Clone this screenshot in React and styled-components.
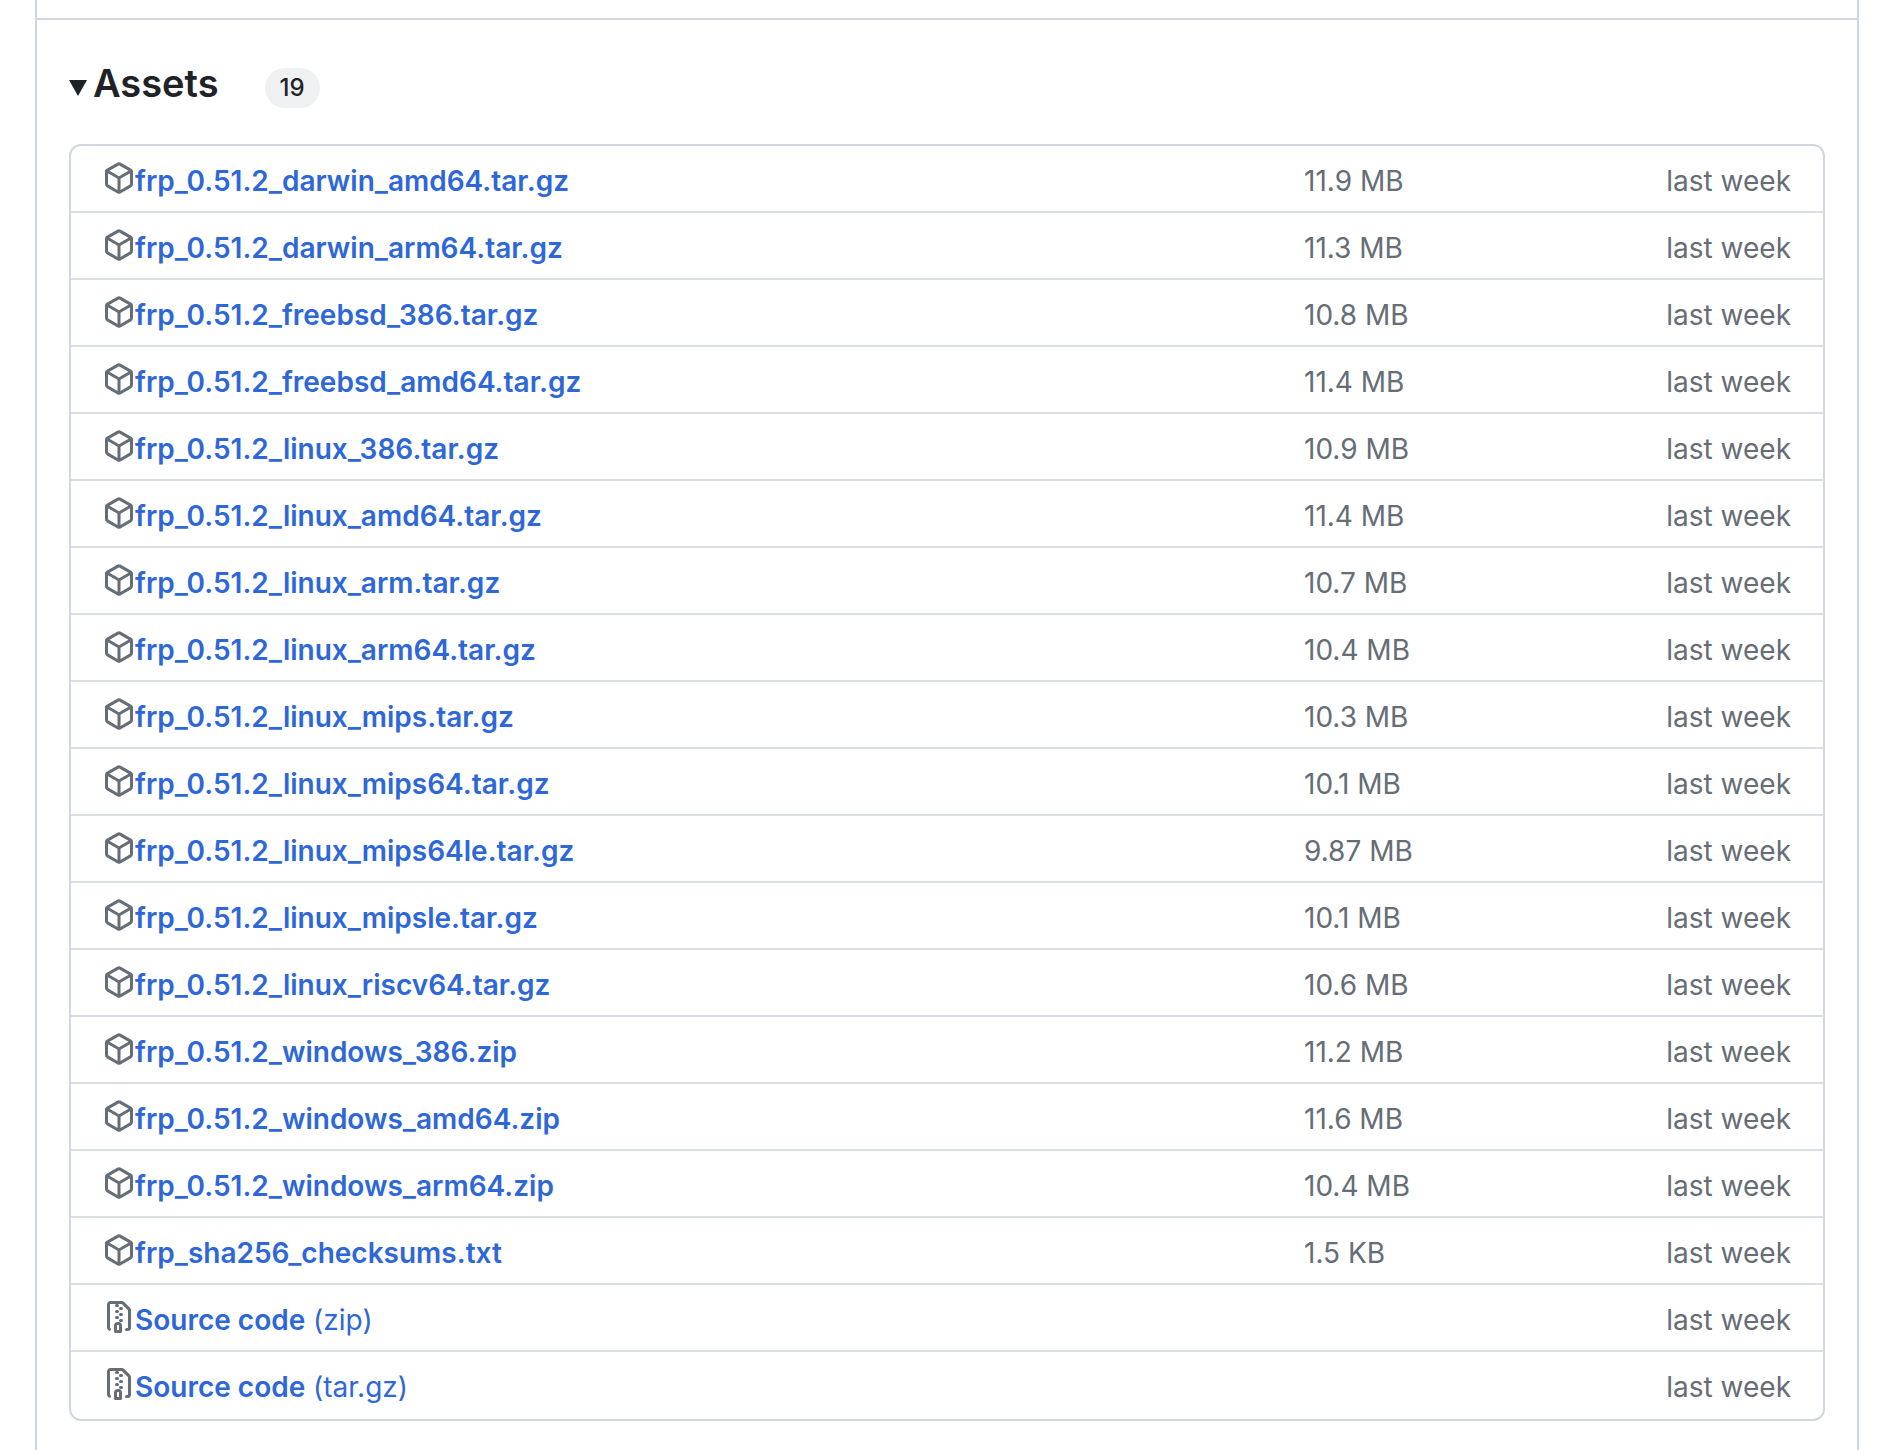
import React from 'react';
import styled, { createGlobalStyle } from 'styled-components';

const GlobalStyle = createGlobalStyle`
  * {
    box-sizing: border-box;
  }

  body {
    margin: 0;
    background: #fff;
    color: #1f2328;
    font-family: Inter, 'Liberation Sans', sans-serif;
    font-size: 28px;
    line-height: 32px;
  }
`;

const Page = styled.main`
  display: flex;
  min-height: 100vh;
  padding: 0 41px 0 35px;
`;

const ReleaseCard = styled.section`
  flex: 1;
  min-width: 0;
  border: solid #d0d7de;
  border-width: 0 2px;
`;

const ReleaseBody = styled.div`
  height: 20px;
  border-bottom: 2px solid #d0d7de;
`;

const Assets = styled.details`
  padding: 38px 32px 28px;
`;

const AssetsSummary = styled.summary`
  display: flex;
  align-items: center;
  height: 60px;
  margin-bottom: 26px;
  list-style: none;
  cursor: pointer;

  &::-webkit-details-marker {
    display: none;
  }
`;

const Marker = styled.svg`
  width: 18px;
  height: 16px;
  margin-right: 6px;
  fill: currentColor;
`;

const Title = styled.h3`
  margin: 0 46px 0 0;
  padding-bottom: 10px;
  font-size: 38px;
  font-weight: 600;
  line-height: 48px;
`;

const Counter = styled.span`
  min-width: 55px;
  padding: 0 14px;
  border-radius: 20px;
  background: #eff0f2;
  font-size: 24px;
  font-weight: 500;
  line-height: 40px;
  text-align: center;
`;

const AssetList = styled.ul`
  margin: 0;
  padding: 0 0 2px;
  border: 2px solid #d0d7de;
  border-radius: 12px;
  list-style: none;
`;

const AssetRow = styled.li`
  display: grid;
  grid-template-columns: minmax(0, 1fr) 120px 367px;
  padding: 16px 32px 15px;

  & + & {
    border-top: 2px solid #d8dee4;
  }
`;

const AssetName = styled.div`
  display: flex;
`;

const Icon = styled.svg`
  flex: none;
  width: 32px;
  height: 32px;
  fill: #656d76;
`;

const AssetLink = styled.a`
  padding-top: 4px;
  line-height: 30px;
  color: #2e67d8;
  font-weight: ${({ $plain }) => ($plain ? 400 : 600)};
  text-decoration: none;
  white-space: pre;

  &:hover {
    text-decoration: underline;
  }
`;

const Strong = styled.span`
  font-weight: 600;
`;

const Meta = styled.span`
  padding-top: 4px;
  line-height: 30px;
  color: #656d76;
  text-align: ${({ $end }) => ($end ? 'right' : 'left')};
  white-space: nowrap;
`;

const PACKAGE =
  'm8.878.392 5.25 3.045c.54.314.872.89.872 1.514v6.098a1.75 1.75 0 0 1-.872 1.514l-5.25 3.045a1.75 1.75 0 0 1-1.756 0l-5.25-3.045A1.75 1.75 0 0 1 1 11.049V4.951c0-.624.332-1.201.872-1.514L7.122.392a1.75 1.75 0 0 1 1.756 0ZM7.875 1.69l-4.63 2.685L8 7.133l4.755-2.758-4.63-2.685a.248.248 0 0 0-.25 0ZM2.5 5.677v5.372c0 .09.047.171.125.216l4.625 2.683V8.432Zm6.25 8.271 4.625-2.683a.25.25 0 0 0 .125-.216V5.677L8.75 8.432Z';
const FILE_ZIP =
  'M3.5 1.75v11.5c0 .09.048.173.126.217a.75.75 0 0 1-.752 1.298A1.748 1.748 0 0 1 2 13.25V1.75C2 .784 2.784 0 3.75 0h5.586c.464 0 .909.185 1.237.513l2.914 2.914c.329.328.513.773.513 1.237v8.586A1.75 1.75 0 0 1 12.25 15h-.5a.75.75 0 0 1 0-1.5h.5a.25.25 0 0 0 .25-.25V4.664a.25.25 0 0 0-.073-.177L9.513 1.573a.25.25 0 0 0-.177-.073H7.25a.75.75 0 0 1 0 1.5h-.5a.75.75 0 0 1 0-1.5h-3a.25.25 0 0 0-.25.25Zm3.75 8.75h.5c.966 0 1.75.784 1.75 1.75v3a.75.75 0 0 1-.75.75h-2.5a.75.75 0 0 1-.75-.75v-3c0-.966.784-1.75 1.75-1.75ZM6 5.25a.75.75 0 0 1 .75-.75h.5a.75.75 0 0 1 0 1.5h-.5A.75.75 0 0 1 6 5.25Zm.75 2.25h.5a.75.75 0 0 1 0 1.5h-.5a.75.75 0 0 1 0-1.5ZM8 6.75A.75.75 0 0 1 8.75 6h.5a.75.75 0 0 1 0 1.5h-.5A.75.75 0 0 1 8 6.75ZM8.75 3h.5a.75.75 0 0 1 0 1.5h-.5a.75.75 0 0 1 0-1.5ZM8 9.75A.75.75 0 0 1 8.75 9h.5a.75.75 0 0 1 0 1.5h-.5A.75.75 0 0 1 8 9.75Zm-1 2.5v2.25h1v-2.25a.25.25 0 0 0-.25-.25h-.5a.25.25 0 0 0-.25.25Z';

const files = [
  ['frp_0.51.2_darwin_amd64.tar.gz', '11.9 MB'],
  ['frp_0.51.2_darwin_arm64.tar.gz', '11.3 MB'],
  ['frp_0.51.2_freebsd_386.tar.gz', '10.8 MB'],
  ['frp_0.51.2_freebsd_amd64.tar.gz', '11.4 MB'],
  ['frp_0.51.2_linux_386.tar.gz', '10.9 MB'],
  ['frp_0.51.2_linux_amd64.tar.gz', '11.4 MB'],
  ['frp_0.51.2_linux_arm.tar.gz', '10.7 MB'],
  ['frp_0.51.2_linux_arm64.tar.gz', '10.4 MB'],
  ['frp_0.51.2_linux_mips.tar.gz', '10.3 MB'],
  ['frp_0.51.2_linux_mips64.tar.gz', '10.1 MB'],
  ['frp_0.51.2_linux_mips64le.tar.gz', '9.87 MB'],
  ['frp_0.51.2_linux_mipsle.tar.gz', '10.1 MB'],
  ['frp_0.51.2_linux_riscv64.tar.gz', '10.6 MB'],
  ['frp_0.51.2_windows_386.zip', '11.2 MB'],
  ['frp_0.51.2_windows_amd64.zip', '11.6 MB'],
  ['frp_0.51.2_windows_arm64.zip', '10.4 MB'],
  ['frp_sha256_checksums.txt', '1.5 KB'],
];

const archives = ['zip', 'tar.gz'];

function Octicon({ path }) {
  return (
    <Icon viewBox='0 0 16 16' aria-hidden='true'>
      <path d={path} />
    </Icon>
  );
}

function App() {
  return (
    <>
      <GlobalStyle />
      <Page>
        <ReleaseCard>
          <ReleaseBody />
          <Assets open>
            <AssetsSummary>
              <Marker viewBox='0 0 18 16' aria-hidden='true'>
                <path d='M0 0h18L9 16z' />
              </Marker>
              <Title>Assets</Title>
              <Counter>19</Counter>
            </AssetsSummary>
            <AssetList>
              {files.map(([name, size]) => (
                <AssetRow key={name}>
                  <AssetName>
                    <Octicon path={PACKAGE} />
                    <AssetLink href={`#${name}`}>{name}</AssetLink>
                  </AssetName>
                  <Meta>{size}</Meta>
                  <Meta $end>last week</Meta>
                </AssetRow>
              ))}
              {archives.map((format) => (
                <AssetRow key={format}>
                  <AssetName>
                    <Octicon path={FILE_ZIP} />
                    <AssetLink href={`#source-${format}`} $plain>
                      <Strong>Source code</Strong> ({format})
                    </AssetLink>
                  </AssetName>
                  <Meta />
                  <Meta $end>last week</Meta>
                </AssetRow>
              ))}
            </AssetList>
          </Assets>
        </ReleaseCard>
      </Page>
    </>
  );
}

export default App;
